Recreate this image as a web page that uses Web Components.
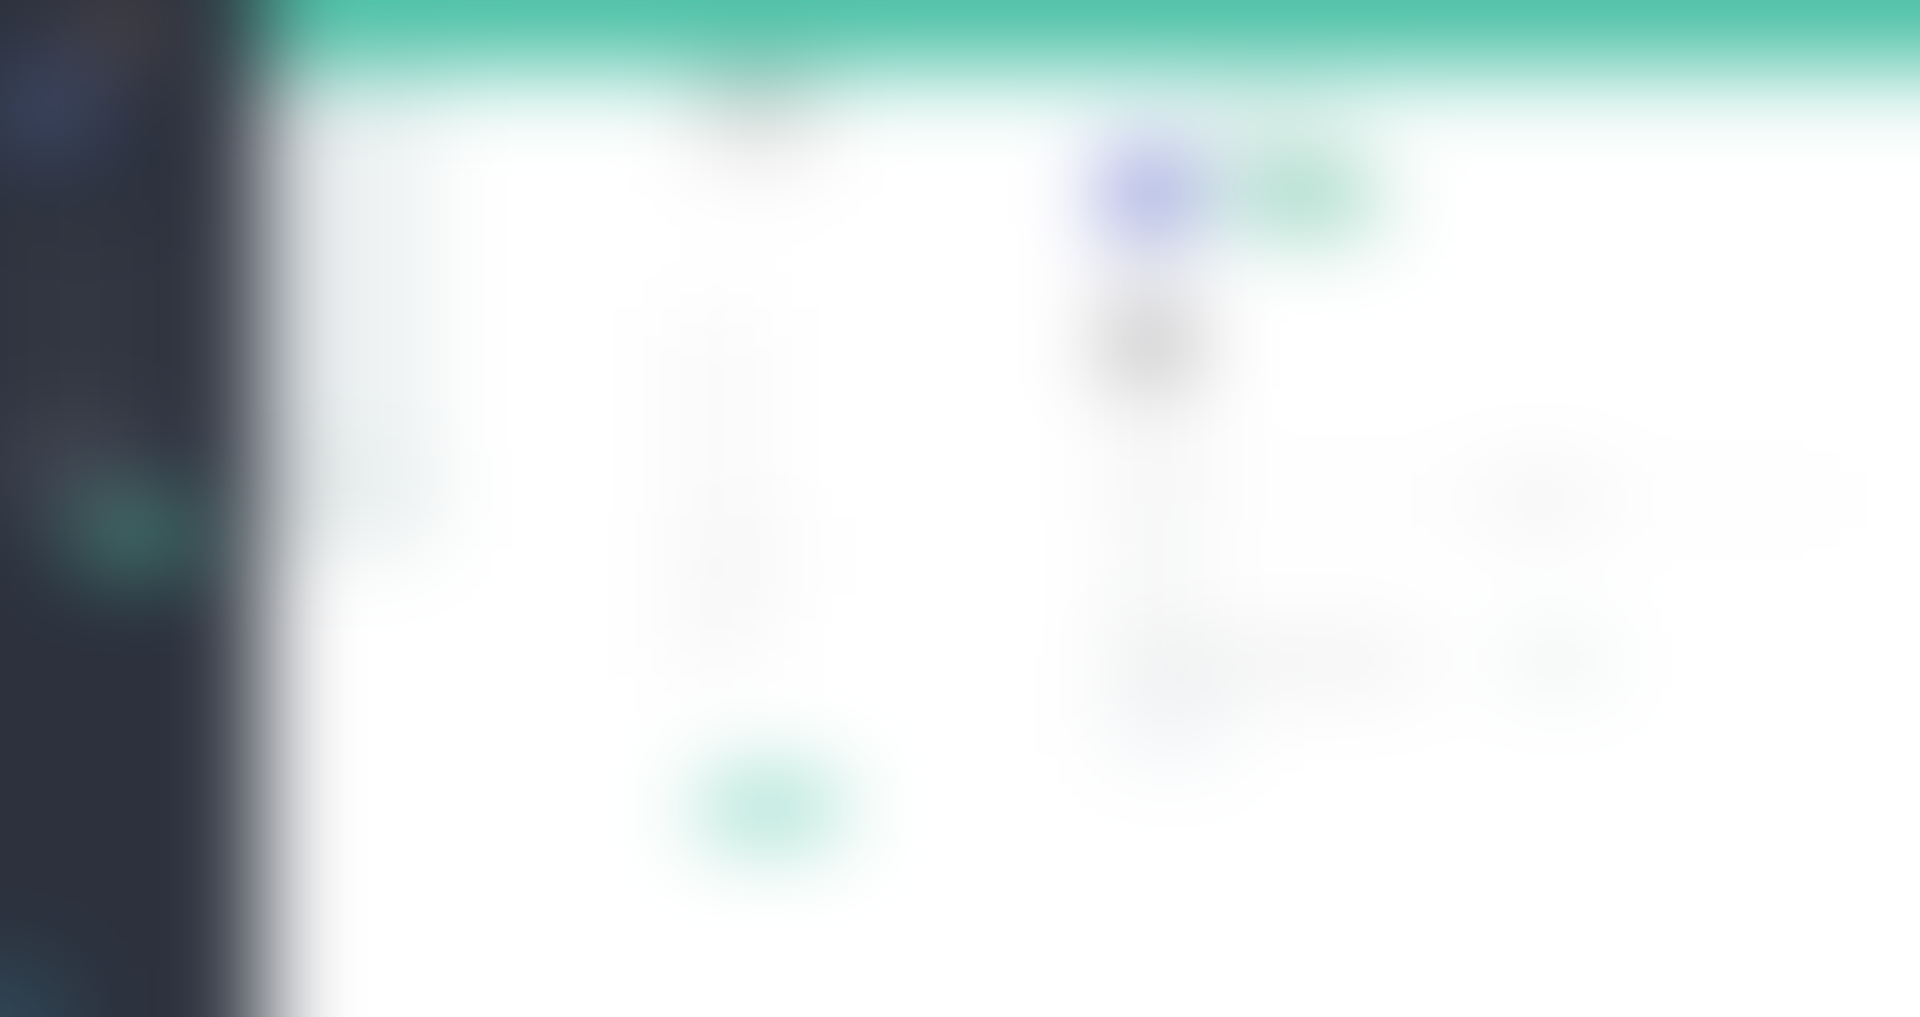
<!DOCTYPE html>
<html lang="en">
<head>
<meta charset="utf-8">
<meta name="viewport" content="width=device-width, initial-scale=1">
<title>Dashboard</title>
<style>
  html, body {
    margin: 0;
    min-height: 100%;
    background: #fff;
  }
</style>
</head>
<body>
<frost-layer>
  <app-shell></app-shell>
</frost-layer>

<script>
(function () {
  // one block of colour: width, height, tone and the space before it
  customElements.define('tone-block', class extends HTMLElement {
    constructor() {
      super()
      this.attachShadow({ mode: 'open' })
    }

    connectedCallback() {
      const width = this.getAttribute('w')
      const height = this.getAttribute('h')
      const tone = this.getAttribute('tone')
      const top = this.getAttribute('top') || 0
      const left = this.getAttribute('left') || 0
      this.shadowRoot.innerHTML = `
        <style>
          :host {
            display: block;
            flex: none;
            box-sizing: border-box;
            width: ${width}px;
            height: ${height}px;
            margin-top: ${top}px;
            margin-left: ${left}px;
            background: ${tone};
          }
        </style>`
    }
  })

  const sideTemplate = document.createElement('template')
  sideTemplate.innerHTML = `
    <style>
      :host {
        display: flex;
        flex-direction: column;
        box-sizing: border-box;
        padding: var(--bleed) 0 0 var(--bleed);
        background: #2c313d;
      }
      .foot {
        margin-top: auto;
        margin-left: calc(-1 * var(--bleed));
        width: 208px;
        height: 192px;
        background: #2f4858;
      }
    </style>
    <tone-block w="96" h="56" left="72" tone="#54494b"></tone-block>
    <tone-block w="96" h="72" tone="#425078" top="16"></tone-block>
    <tone-block w="160" h="200" top="80" tone="#333742"></tone-block>
    <tone-block w="152" h="88" tone="#424652"></tone-block>
    <tone-block w="120" h="48" left="76" tone="#4a9e8c"></tone-block>
    <div class="foot"></div>
  `
  customElements.define('side-bar', class extends HTMLElement {
    constructor() {
      super()
      this.attachShadow({ mode: 'open' })
      this.shadowRoot.appendChild(sideTemplate.content.cloneNode(true))
    }
  })

  const columnTemplate = document.createElement('template')
  columnTemplate.innerHTML = `
    <style>
      :host {
        display: flex;
        flex-direction: column;
        min-width: 0;
      }
    </style>
    <slot></slot>
  `
  customElements.define('page-column', class extends HTMLElement {
    constructor() {
      super()
      this.attachShadow({ mode: 'open' })
      this.shadowRoot.appendChild(columnTemplate.content.cloneNode(true))
    }
  })

  // softens what is slotted in; the content bleeds past the window
  // so that the blur does not fade at the edges
  const frostTemplate = document.createElement('template')
  frostTemplate.innerHTML = `
    <style>
      :host {
        --bleed: 144px;
        display: block;
        height: 100vh;
        overflow: hidden;
      }
      .pane {
        margin: calc(-1 * var(--bleed));
        filter: blur(44px);
      }
    </style>
    <div class="pane"><slot></slot></div>
  `
  customElements.define('frost-layer', class extends HTMLElement {
    constructor() {
      super()
      this.attachShadow({ mode: 'open' })
      this.shadowRoot.appendChild(frostTemplate.content.cloneNode(true))
    }
  })

  const shellTemplate = document.createElement('template')
  shellTemplate.innerHTML = `
    <style>
      :host {
        display: grid;
        grid-template-columns: calc(264px + var(--bleed)) minmax(0, 1fr);
        min-height: calc(100vh + 2 * var(--bleed));
        background: #fff;
      }
      header {
        height: calc(68px + var(--bleed));
        background: #4ac0a5;
      }
      main {
        display: grid;
        grid-template-columns: 24fr 27fr 49fr;
        margin-right: var(--bleed);
      }
      .row {
        display: flex;
        align-items: center;
      }
    </style>
    <side-bar></side-bar>
    <div>
      <header></header>
      <main>
        <page-column>
          <tone-block w="168" h="384" tone="#edf1f2"></tone-block>
          <tone-block w="168" h="96" tone="#e6ecec"></tone-block>
        </page-column>
        <page-column>
          <tone-block w="112" h="32" left="40" top="16" tone="#b4aeae"></tone-block>
          <tone-block w="112" h="64" left="40" tone="#f4f4f4"></tone-block>
          <tone-block w="80" h="208" left="16" top="128" tone="#f8f8f8"></tone-block>
          <tone-block w="112" h="80" left="16" tone="#f6f6f6"></tone-block>
          <tone-block w="80" h="80" left="16" tone="#f6f6f6"></tone-block>
          <tone-block w="128" h="40" left="44" top="112" tone="#54c4a8"></tone-block>
        </page-column>
        <page-column>
          <tone-block w="136" h="24" left="96" top="48" tone="#c4dcd4"></tone-block>
          <div class="row">
            <tone-block w="80" h="72" top="16" tone="#6c78cc"></tone-block>
            <tone-block w="144" h="48" left="40" top="24" tone="#68c0a4"></tone-block>
          </div>
          <tone-block w="80" h="72" top="24" tone="#f0f0f0"></tone-block>
          <tone-block w="80" h="40" tone="#7c7c82"></tone-block>
          <tone-block w="88" h="104" top="16" tone="#f5f5f5"></tone-block>
          <div class="row">
            <tone-block w="88" h="32" tone="#f4f4f4"></tone-block>
            <tone-block w="296" h="32" tone="#fafafa"></tone-block>
            <tone-block w="96" h="32" tone="#e4e4e4"></tone-block>
            <tone-block w="264" h="32" tone="#fbfbfb"></tone-block>
          </div>
          <tone-block w="88" h="128" tone="#f6f7f7"></tone-block>
          <div class="row">
            <tone-block w="312" h="32" tone="#e4e5e4"></tone-block>
            <tone-block w="96" h="32" left="88" tone="#dde5e6"></tone-block>
          </div>
          <tone-block w="120" h="64" top="16" tone="#eff2f5"></tone-block>
        </page-column>
      </main>
    </div>
  `
  customElements.define('app-shell', class extends HTMLElement {
    constructor() {
      super()
      this.attachShadow({ mode: 'open' })
      this.shadowRoot.appendChild(shellTemplate.content.cloneNode(true))
    }
  })
})();
</script>
</body>
</html>
